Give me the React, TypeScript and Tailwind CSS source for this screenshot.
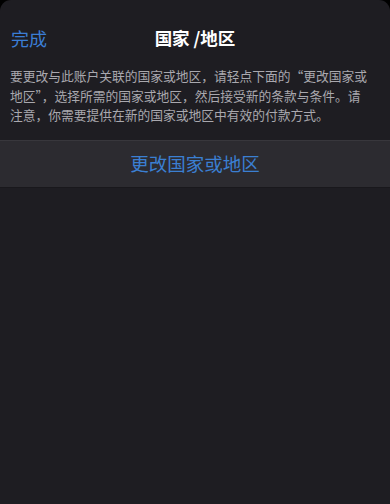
export default function App() {
  const font = { fontFamily: '"Noto Sans CJK SC", "Noto Sans", sans-serif' };

  return (
    <div className="h-[504px] w-full bg-black overflow-hidden" style={font}>
      <div className="h-full bg-[#1e1d22] rounded-t-[11px] flex flex-col">
        {/* Nav bar */}
        <div className="relative h-[60px] flex items-center justify-center pt-[26px] pb-[10px]">
          <button className="absolute left-[11px] top-[26px] text-[18px] leading-[24px] text-[#3b7dd6]">
            完成
          </button>
          <h1 className="text-[17.5px] leading-[24px] font-bold text-white">国家 /地区</h1>
        </div>

        {/* Description */}
        <div className="px-[10px] pt-[6px] text-[12.75px] leading-[19.5px] text-[#a9a8ae] whitespace-nowrap">
          <div>要更改与此账户关联的国家或地区，请轻点下面的“更改国家或</div>
          <div>地区”，选择所需的国家或地区，然后接受新的条款与条件。请</div>
          <div>注意，你需要提供在新的国家或地区中有效的付款方式。</div>
        </div>

        {/* Change button row */}
        <button className="mt-[15px] h-[48px] w-full bg-[#2c2b30] border-t border-[#38373c] border-b border-b-[#19181c] flex items-center justify-center text-[18.5px] text-[#3b7fd2]">
          更改国家或地区
        </button>
      </div>
    </div>
  );
}
